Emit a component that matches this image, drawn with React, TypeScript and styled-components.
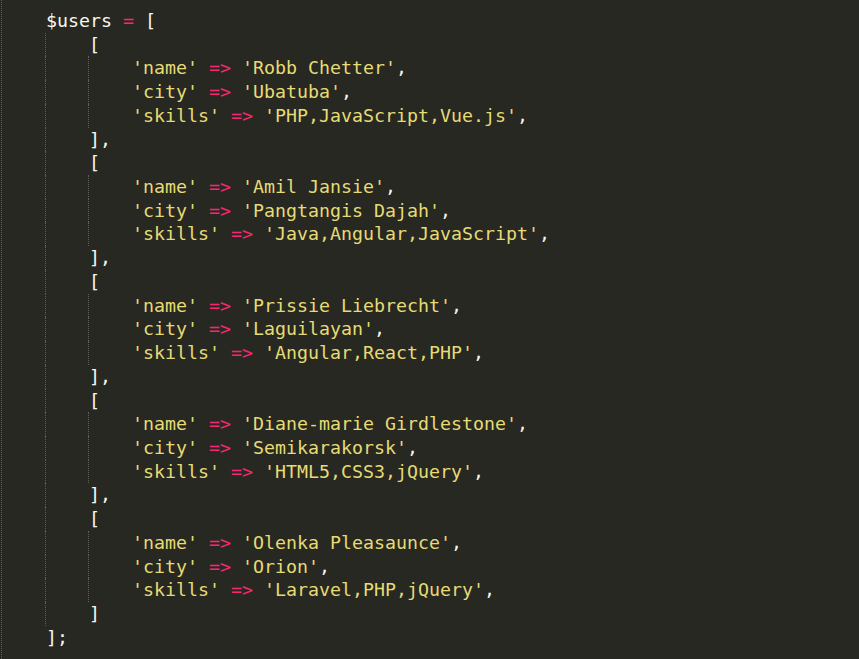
import React from "react";
import styled, { createGlobalStyle } from "styled-components";

const Global = createGlobalStyle`
  html, body { margin: 0; padding: 0; background: #272822; }
  body { overflow: hidden; }
`;

const GUIDE = "#5f5f57";

const Editor = styled.div`
  box-sizing: border-box;
  width: 859px;
  height: 659px;
  background: #272822;
  padding: 0 0 0 1px;
  overflow: hidden;
`;

const Code = styled.div`
  box-sizing: border-box;
  height: 100%;
  padding-top: 9px;
  border-left: 1px dotted ${GUIDE};
  font-family: "DejaVu Sans Mono", "Liberation Mono", monospace;
  font-size: 18.27px;
  line-height: 23.73px;
  color: #f8f8f2;
`;

const Line = styled.div`
  display: flex;
  height: 23.73px;
  white-space: pre;
`;

const Indent = styled.span<{ $guide: boolean }>`
  box-sizing: border-box;
  width: 44px;
  flex: none;
  height: 100%;
  margin-left: ${(p) => (p.$guide ? "-1px" : "0")};
  border-left: ${(p) => (p.$guide ? `1px dotted ${GUIDE}` : "none")};
`;

const Text = styled.span`
  margin-left: 0;
`;

const Str = styled.span`
  color: #e6db74;
`;

const Op = styled.span`
  color: #f92672;
`;

type Tok = { t: string; k?: "s" | "o" };

const line = (indent: number, toks: Tok[]) => ({ indent, toks });

const users = [
  ["Robb Chetter", "Ubatuba", "PHP,JavaScript,Vue.js"],
  ["Amil Jansie", "Pangtangis Dajah", "Java,Angular,JavaScript"],
  ["Prissie Liebrecht", "Laguilayan", "Angular,React,PHP"],
  ["Diane-marie Girdlestone", "Semikarakorsk", "HTML5,CSS3,jQuery"],
  ["Olenka Pleasaunce", "Orion", "Laravel,PHP,jQuery"],
];

const pair = (key: string, val: string): Tok[] => [
  { t: `'${key}'`, k: "s" },
  { t: " " },
  { t: "=>", k: "o" },
  { t: " " },
  { t: `'${val}'`, k: "s" },
  { t: "," },
];

const lines = [
  line(1, [{ t: "$users " }, { t: "=", k: "o" }, { t: " [" }]),
  ...users.flatMap((u, i) => [
    line(2, [{ t: "[" }]),
    line(3, pair("name", u[0])),
    line(3, pair("city", u[1])),
    line(3, pair("skills", u[2])),
    line(2, [{ t: i === users.length - 1 ? "]" : "]," }]),
  ]),
  line(1, [{ t: "];" }]),
];

export default function App() {
  return (
    <>
      <Global />
      <Editor>
        <Code>
          {lines.map((l, i) => (
            <Line key={i}>
              {Array.from({ length: l.indent }).map((_, j) => (
                <Indent key={j} $guide={j > 0} />
              ))}
              <Text>
                {l.toks.map((tk, j) =>
                  tk.k === "s" ? (
                    <Str key={j}>{tk.t}</Str>
                  ) : tk.k === "o" ? (
                    <Op key={j}>{tk.t}</Op>
                  ) : (
                    <React.Fragment key={j}>{tk.t}</React.Fragment>
                  )
                )}
              </Text>
            </Line>
          ))}
        </Code>
      </Editor>
    </>
  );
}
